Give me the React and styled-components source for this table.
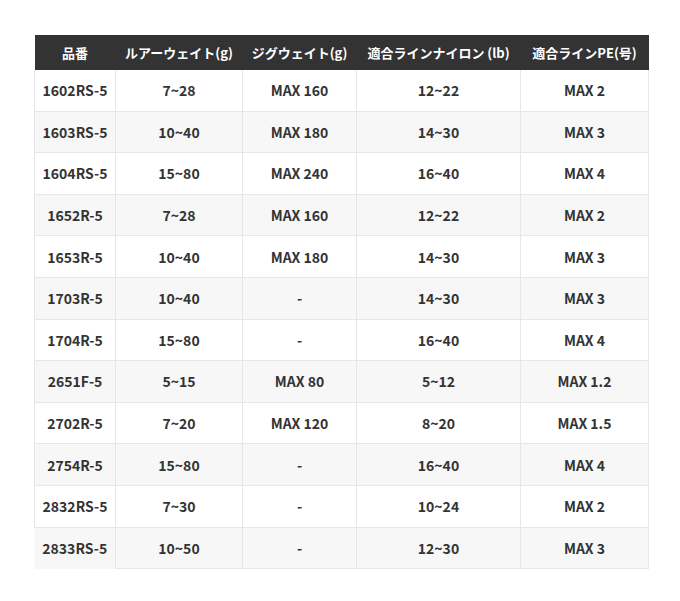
import React from "react";
import styled, { createGlobalStyle } from "styled-components";

const Global = createGlobalStyle`
  html, body { margin: 0; padding: 0; background: #fff; }
  body { font-family: "Noto Sans CJK JP", "Noto Sans", sans-serif; }
`;

const Page = styled.div`
  padding: 35px 32px 0 34px;
`;

const Table = styled.table`
  width: 614px;
  border-collapse: collapse;
  table-layout: fixed;
  font-size: 14px;
  color: #333;
`;

const HeadCell = styled.th`
  background: #333;
  color: #fff;
  font-weight: 700;
  font-size: 13px;
  height: 35px;
  padding: 0;
  text-align: center;
  white-space: nowrap;
`;

const Row = styled.tr`
  background: ${(p) => (p.$alt ? "#f7f7f7" : "#fff")};
`;

const Cell = styled.td`
  height: 40.6px;
  padding: 0;
  text-align: center;
  font-weight: 700;
  border: 1px solid #e6e6e6;
  border-top: none;
  white-space: nowrap;
  ${(p) => p.$last && p.$first && "border-left: none; border-bottom: none;"}
`;

const cols = [81, 127, 114, 164, 128];
const head = ["品番", "ルアーウェイト(g)", "ジグウェイト(g)", "適合ラインナイロン (lb)", "適合ラインPE(号)"];
const rows = [
  ["1602RS-5", "7~28", "MAX 160", "12~22", "MAX 2"],
  ["1603RS-5", "10~40", "MAX 180", "14~30", "MAX 3"],
  ["1604RS-5", "15~80", "MAX 240", "16~40", "MAX 4"],
  ["1652R-5", "7~28", "MAX 160", "12~22", "MAX 2"],
  ["1653R-5", "10~40", "MAX 180", "14~30", "MAX 3"],
  ["1703R-5", "10~40", "-", "14~30", "MAX 3"],
  ["1704R-5", "15~80", "-", "16~40", "MAX 4"],
  ["2651F-5", "5~15", "MAX 80", "5~12", "MAX 1.2"],
  ["2702R-5", "7~20", "MAX 120", "8~20", "MAX 1.5"],
  ["2754R-5", "15~80", "-", "16~40", "MAX 4"],
  ["2832RS-5", "7~30", "-", "10~24", "MAX 2"],
  ["2833RS-5", "10~50", "-", "12~30", "MAX 3"],
];

export default function App() {
  return (
    <Page>
      <Global />
      <Table>
        <colgroup>
          {cols.map((w, i) => (
            <col key={i} style={{ width: w }} />
          ))}
        </colgroup>
        <thead>
          <tr>
            {head.map((h) => (
              <HeadCell key={h}>{h}</HeadCell>
            ))}
          </tr>
        </thead>
        <tbody>
          {rows.map((r, i) => (
            <Row key={r[0]} $alt={i % 2 === 1}>
              {r.map((c, j) => (
                <Cell key={j} $first={j === 0} $last={i === rows.length - 1}>
                  {c}
                </Cell>
              ))}
            </Row>
          ))}
        </tbody>
      </Table>
    </Page>
  );
}
